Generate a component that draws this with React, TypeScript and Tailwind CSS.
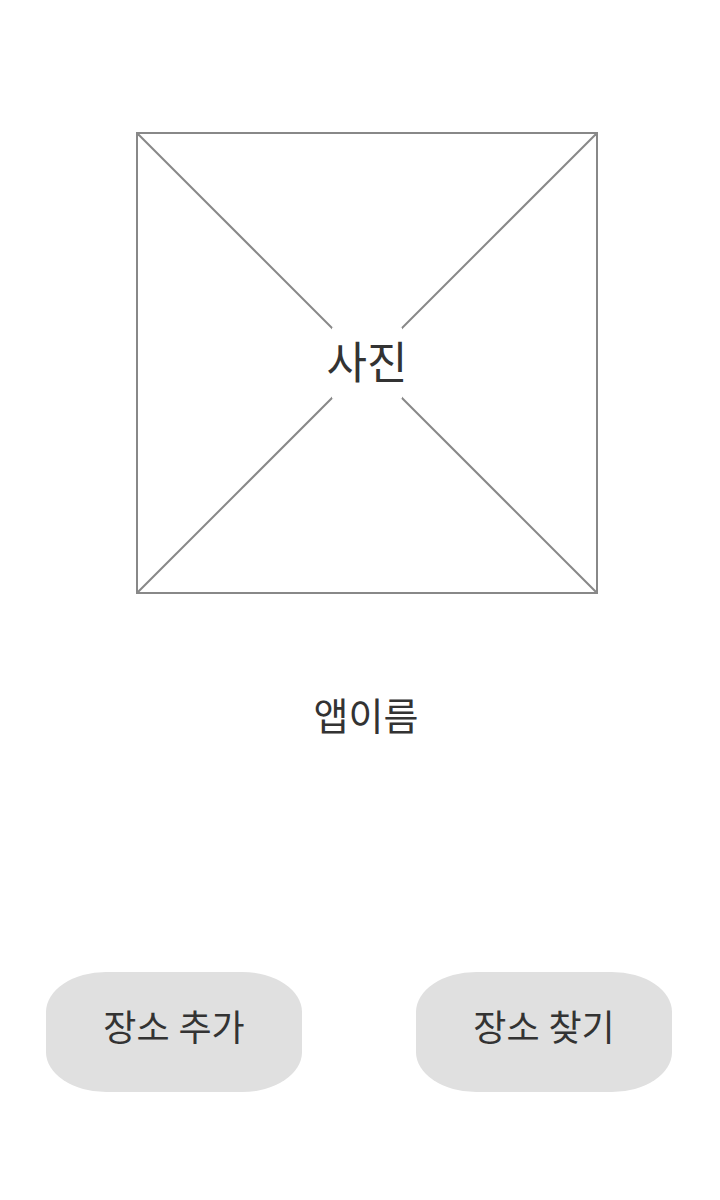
import React from "react";

const font = { fontFamily: '"Roboto", "Noto Sans CJK KR", sans-serif' };

function PhotoPlaceholder() {
  return (
    <div className="relative ml-[136px] h-[462px] w-[462px] border-2 border-[#888888]">
      <svg className="absolute inset-0 h-full w-full" viewBox="0 0 458 458" preserveAspectRatio="none">
        <line x1="0" y1="0" x2="458" y2="458" stroke="#888888" strokeWidth="2" />
        <line x1="458" y1="0" x2="0" y2="458" stroke="#888888" strokeWidth="2" />
      </svg>
      <div className="absolute left-1/2 top-1/2 flex h-[71px] w-[70px] -translate-x-1/2 -translate-y-1/2 items-center justify-center bg-white">
        <span className="whitespace-nowrap text-[44px] leading-none text-[#333333]">사진</span>
      </div>
    </div>
  );
}

function PillButton({ label }: { label: string }) {
  return (
    <button className="flex h-[120px] w-[256px] items-center justify-center rounded-[60px/40px] bg-[#e0e0e0] pb-[6px] text-[36px] text-[#333333]">
      {label}
    </button>
  );
}

export default function App() {
  return (
    <div className="flex h-[1200px] w-[720px] flex-col bg-white" style={font}>
      <div className="pt-[132px]">
        <PhotoPlaceholder />
      </div>
      <div className="mt-[97px] flex justify-center pl-[12px]">
        <span className="text-[38px] leading-[52px] text-[#333333]">앱이름</span>
      </div>
      <div className="mt-[229px] flex justify-between px-[46px] pr-[48px]">
        <PillButton label="장소 추가" />
        <PillButton label="장소 찾기" />
      </div>
    </div>
  );
}
